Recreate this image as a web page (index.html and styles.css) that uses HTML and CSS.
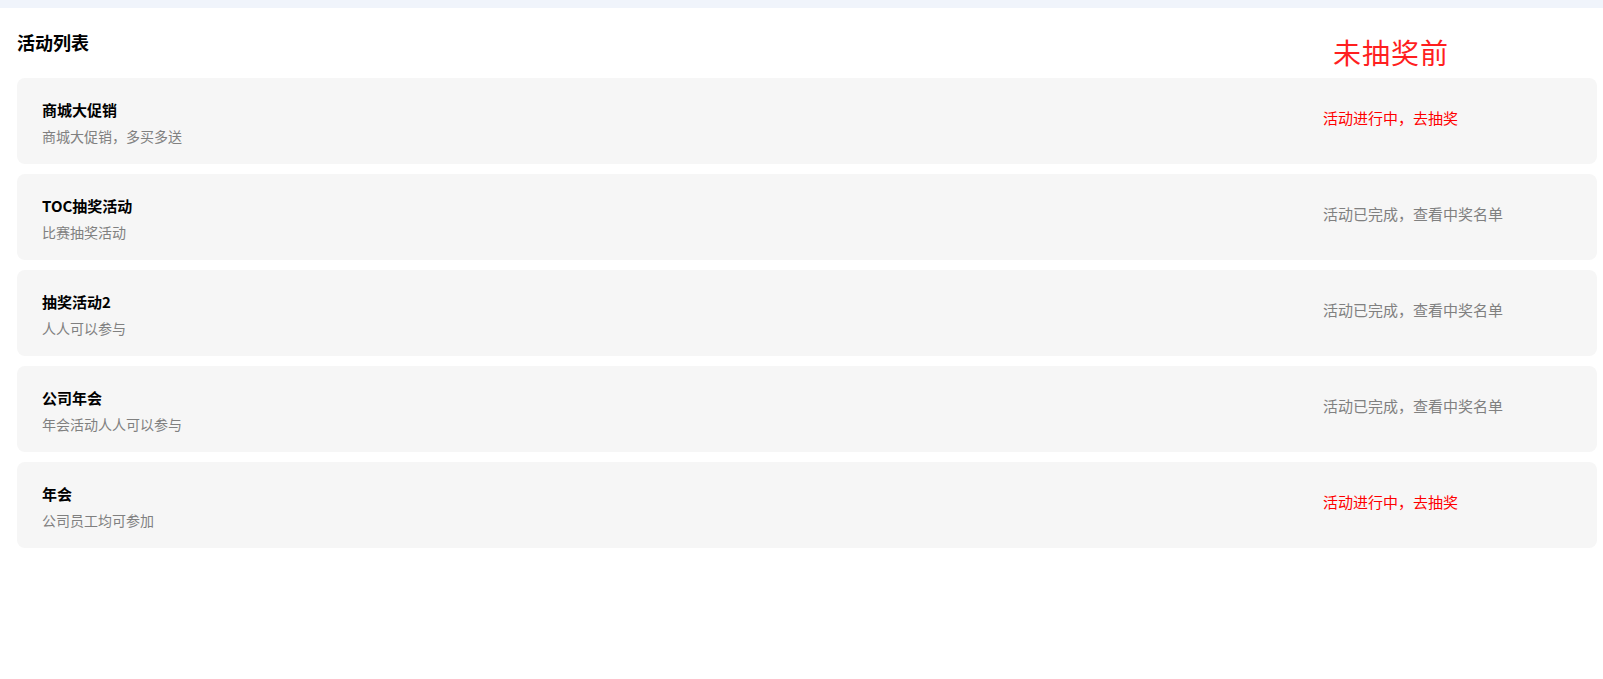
FILE: index.html
```html
<!doctype html>
<html lang="zh-CN">
<head>
    <meta charset="UTF-8">
    <meta name="viewport" content="width=device-width, initial-scale=1.0">
    <title>活动列表</title>
    <link rel="stylesheet" href="styles.css">
</head>
<body>

<div class="top-bar"></div>

<div class="page">
    <h3 class="page-title">活动列表</h3>

    <!-- 标注 -->
    <div class="mark">未抽奖前</div>

    <ul class="act-list">
        <li class="act-item">
            <div class="act-info">
                <p class="act-name">商城大促销</p>
                <p class="act-desc">商城大促销，多买多送</p>
            </div>
            <a class="act-status going" href="javascript:;">活动进行中，去抽奖</a>
        </li>
        <li class="act-item">
            <div class="act-info">
                <p class="act-name">TOC抽奖活动</p>
                <p class="act-desc">比赛抽奖活动</p>
            </div>
            <a class="act-status" href="javascript:;">活动已完成，查看中奖名单</a>
        </li>
        <li class="act-item">
            <div class="act-info">
                <p class="act-name">抽奖活动2</p>
                <p class="act-desc">人人可以参与</p>
            </div>
            <a class="act-status" href="javascript:;">活动已完成，查看中奖名单</a>
        </li>
        <li class="act-item">
            <div class="act-info">
                <p class="act-name">公司年会</p>
                <p class="act-desc">年会活动人人可以参与</p>
            </div>
            <a class="act-status" href="javascript:;">活动已完成，查看中奖名单</a>
        </li>
        <li class="act-item">
            <div class="act-info">
                <p class="act-name">年会</p>
                <p class="act-desc">公司员工均可参加</p>
            </div>
            <a class="act-status going" href="javascript:;">活动进行中，去抽奖</a>
        </li>
    </ul>
</div>

</body>
</html>
```

FILE: styles.css
```css
*{
    margin: 0;
    padding: 0;
}
body{
    background-color: #fff;
    font-family: "Noto Sans CJK SC", "Noto Sans", "Liberation Sans", sans-serif;
    color: #000;
}
a{
    text-decoration: none;
}
ul{
    list-style: none;
}

.top-bar{
    height: 8px;
    background-color: #F0F4FB;
}

.page{
    position: relative;
    padding: 22px 6px 0 17px;
}

.page-title{
    height: 24px;
    line-height: 24px;
    font-size: 18px;
    font-weight: bold;
}

.mark{
    position: absolute;
    top: 24px;
    left: 1333px;
    font-size: 28px;
    line-height: 40px;
    color: #FF1F1F;
    letter-spacing: 1px;
}

.act-list{
    margin-top: 24px;
    display: flex;
    flex-direction: column;
    gap: 10px;
}

.act-item{
    height: 86px;
    box-sizing: border-box;
    padding: 0 24px 0 25px;
    background-color: #F6F6F6;
    border-radius: 8px;
    display: flex;
    align-items: center;
}

.act-info{
    flex: 1;
    padding-top: 3px;
}

.act-name{
    font-size: 15px;
    font-weight: bold;
    line-height: 20px;
    color: #000;
}

.act-desc{
    margin-top: 6px;
    font-size: 14px;
    line-height: 20px;
    color: #808080;
}

.act-status{
    width: 250px;
    padding-bottom: 7px;
    font-size: 15px;
    line-height: 20px;
    color: #808080;
}
.act-status.going{
    color: #FF0000;
}
```
